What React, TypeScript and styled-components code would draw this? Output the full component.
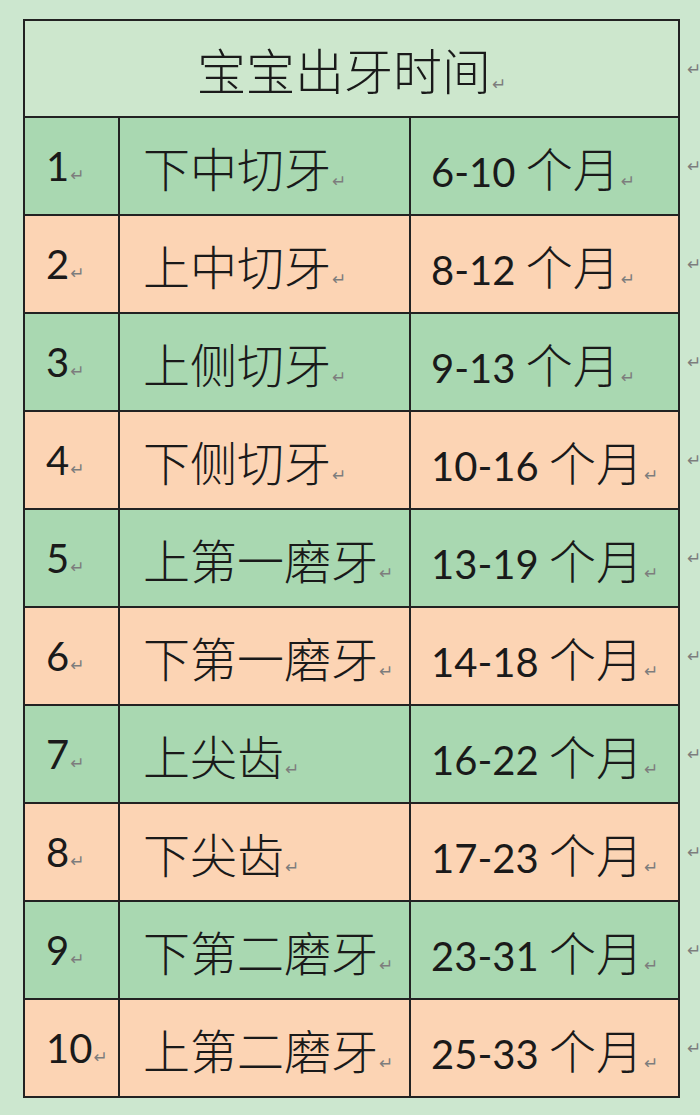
import styled, { createGlobalStyle } from "styled-components";

const GlobalStyle = createGlobalStyle`
  html, body {
    margin: 0;
    padding: 0;
    background-color: #cce7cf;
  }
`;

const Page = styled.div`
  width: 700px;
  height: 1115px;
  box-sizing: border-box;
  padding: 19px 0 0 23px;
  background-color: #cce7cf;
  font-family: Lato, "Noto Sans CJK SC", sans-serif;
  color: #1a1a1a;
`;

const Table = styled.table`
  width: 677px;
  border-collapse: collapse;
  table-layout: fixed;
`;

const Row = styled.tr<{ $tone: "head" | "green" | "orange" }>`
  height: ${(p) => (p.$tone === "head" ? 97 : 98)}px;
  background-color: ${(p) =>
    p.$tone === "green" ? "#a9d8b1" : p.$tone === "orange" ? "#fcd4b4" : "#cde7cd"};
`;

const Cell = styled.td<{ $pad?: number; $center?: boolean }>`
  border: 2px solid #222;
  padding: 0 0 0 ${(p) => (p.$center ? 0 : p.$pad ?? 22)}px;
  text-align: ${(p) => (p.$center ? "center" : "left")};
  vertical-align: middle;
  white-space: nowrap;
  overflow: hidden;
`;

const MarkCell = styled.td`
  border: none;
  background-color: #cce7cf;
  padding: 0 0 0 6px;
  vertical-align: middle;
`;

const Num = styled.span`
  font-family: Lato, sans-serif;
  font-size: 40px;
`;

const Han = styled.span`
  font-family: "Noto Sans CJK SC", sans-serif;
  font-weight: 300;
  font-size: 47px;
`;

const Title = styled(Han)`
  font-size: 49px;
`;

const Mark = styled.span`
  font-family: "DejaVu Sans", sans-serif;
  font-size: 17px;
  color: #7d7d7d;
  margin-left: 1px;
`;

const rows = [
  ["1", "下中切牙", "6-10"],
  ["2", "上中切牙", "8-12"],
  ["3", "上侧切牙", "9-13"],
  ["4", "下侧切牙", "10-16"],
  ["5", "上第一磨牙", "13-19"],
  ["6", "下第一磨牙", "14-18"],
  ["7", "上尖齿", "16-22"],
  ["8", "下尖齿", "17-23"],
  ["9", "下第二磨牙", "23-31"],
  ["10", "上第二磨牙", "25-33"],
];

export default function App() {
  return (
    <Page>
      <GlobalStyle />
      <Table>
        <colgroup>
          <col style={{ width: 95 }} />
          <col style={{ width: 291 }} />
          <col style={{ width: 269 }} />
          <col style={{ width: 22 }} />
        </colgroup>
        <tbody>
          <Row $tone="head">
            <Cell colSpan={3} $center>
              <Title>宝宝出牙时间</Title>
              <Mark>↵</Mark>
            </Cell>
            <MarkCell>
              <Mark>↵</Mark>
            </MarkCell>
          </Row>
          {rows.map(([n, name, months], i) => (
            <Row key={n} $tone={i % 2 === 0 ? "green" : "orange"}>
              <Cell $pad={21}>
                <Num>{n}</Num>
                <Mark>↵</Mark>
              </Cell>
              <Cell $pad={23}>
                <Han>{name}</Han>
                <Mark>↵</Mark>
              </Cell>
              <Cell $pad={20}>
                <Num>{months} </Num>
                <Han>个月</Han>
                <Mark>↵</Mark>
              </Cell>
              <MarkCell>
                <Mark>↵</Mark>
              </MarkCell>
            </Row>
          ))}
        </tbody>
      </Table>
    </Page>
  );
}
